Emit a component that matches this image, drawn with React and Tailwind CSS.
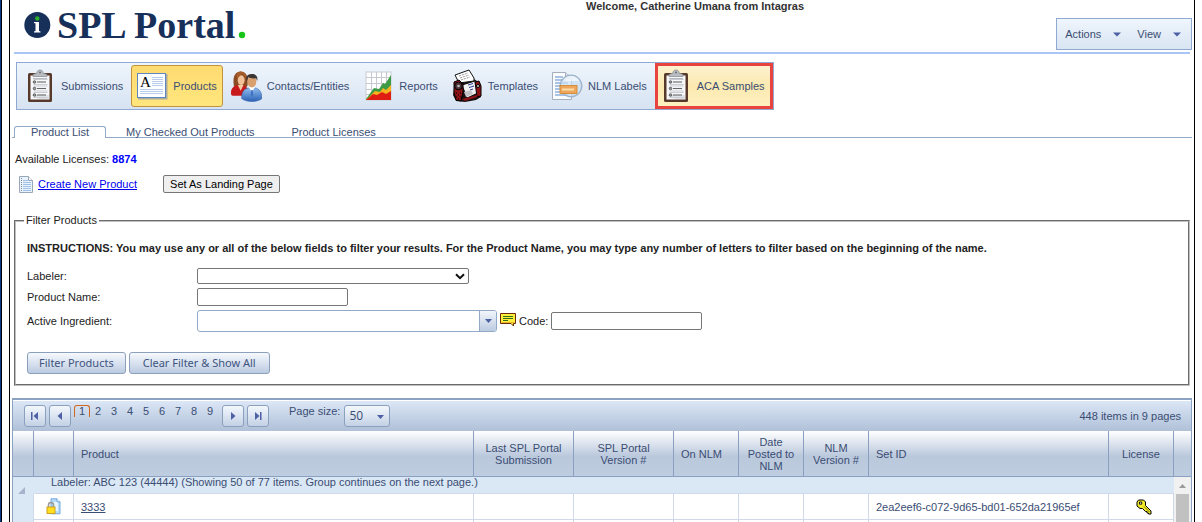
import React from "react";

const NAVY_TEXT = "text-[#3a4d73]";

function ClipboardIcon() {
  return (
    <svg width="26" height="34" viewBox="0 0 26 34" aria-hidden="true">
      <rect x="1" y="4" width="24" height="29" rx="1.500" fill="#573a2b" />
      <rect x="3.500" y="6.500" width="19" height="24" fill="#f7f8fa" />
      <path d="M4 26h18v4h-10z" fill="#dfe3e8" />
      <path d="M6 7.500V5.500l4-1.500C10 2 11.200 1 13 1s3 1 3 3l4 1.500V7.500z" fill="#b9bdc2" stroke="#85898e" strokeWidth="0.700" />
      <circle cx="13" cy="3.400" r="1" fill="#6a6d71" />
      <path d="M6 9.500h14" stroke="#a5a9af" strokeWidth="0.800" />
      {[13, 19.500, 26].map((y) => (
        <g key={y}>
          <path d={`M6.500 ${y - 2.500}h14M6.500 ${y + 2.500}h14`} stroke="#c9cdd3" strokeWidth="1" />
          <circle cx="7.500" cy={y} r="1.300" fill="#999" stroke="#444" strokeWidth="0.700" />
          <path d={`M10 ${y}h9`} stroke="#666" strokeWidth="1.100" />
        </g>
      ))}
    </svg>
  );
}

function ProductDocIcon() {
  return (
    <svg width="32" height="28" viewBox="0 0 32 28" aria-hidden="true">
      <rect x="2" y="2" width="29.500" height="25.500" fill="#8896ad" opacity="0.700" />
      <rect x="1.500" y="1.500" width="28" height="24" fill="#fbfdff" stroke="#5f86c0" />
      <text x="4" y="15" fontFamily="Liberation Serif, serif" fontSize="15" fill="#000">A</text>
      <path d="M16 5.500h11M16 7.500h11M16 9.500h11M16 11.500h11M16 13.500h11M4 17.500h23M4 19.500h23M4 21.500h23" stroke="#b9cdea" strokeWidth="1" />
    </svg>
  );
}

function PeopleIcon() {
  return (
    <svg width="33" height="33" viewBox="0 0 33 33" aria-hidden="true">
      <defs>
        <linearGradient id="blueCoat" x1="0" y1="0" x2="0" y2="1">
          <stop offset="0" stopColor="#8fbdf0" />
          <stop offset="1" stopColor="#2c61b4" />
        </linearGradient>
      </defs>
      <path d="M4 16C2 4 7 1 11 1s9 3 7 15l-3 3H6z" fill="#8a4a22" />
      <path d="M1 23c0-5 3-7 7-8h6l5 4v7H3c-1.500 0-2-1-2-3z" fill="#c8191d" />
      <path d="M8 15l3 6 3-6z" fill="#f3c9a4" />
      <ellipse cx="11.500" cy="10" rx="3.600" ry="5" fill="#f2c197" />
      <path d="M7 8c2-1 4-3 5-5 2 1 4 3 4 6 2-5-1-8-5-8S6 4 7 8z" fill="#a65e2c" />
      <path d="M12 29c0-8 3-10 7-11h7c4 1 7 4 7 11-5 4-16 4-21 0z" fill="url(#blueCoat)" stroke="#3563a8" strokeWidth="0.600" />
      <path d="M19 17l3.500 5 3.500-5z" fill="#fff" />
      <path d="M22 20h1.300l.6 5-1.200 2-1.300-2z" fill="#3f6fc0" />
      <ellipse cx="22.500" cy="11.500" rx="4.600" ry="6" fill="#d99f6c" />
      <path d="M17 11c-1-5 1-7.500 5.500-7.500S29 6 28 11l-1-3c-3 .5-6 0-8-1z" fill="#3b3533" />
    </svg>
  );
}

function ChartIcon() {
  return (
    <svg width="27" height="30" viewBox="0 0 27 30" aria-hidden="true">
      <rect x="1" y="1" width="25" height="28" fill="#fff" stroke="#c9ccd2" />
      <path d="M6.500 1v28M11.500 1v28M16.500 1v28M21.500 1v28M1 6.500h25M1 12.500h25M1 18.500h25M1 23.500h25" stroke="#c6cad0" strokeWidth="1" />
      <path d="M1 28L9 17l5 1 4-6 2 1 6-9v25H1z" fill="#3d9a45" />
      <path d="M1 29l9-9 5 1 3-4 3 2 5-5v15z" fill="#f7b21d" />
      <path d="M1 29l7-6 4 1 5-3 4 2 5-3v9z" fill="#e01d12" />
    </svg>
  );
}

function RolodexIcon() {
  return (
    <svg width="30" height="34" viewBox="0 0 30 34" aria-hidden="true">
      <path d="M3 14l5-3 14-1 6 4 1 5v9l-5 3-11 2-9-1-3-6z" fill="#1a1010" />
      <path d="M3 6L17 1l5 8v3L7 14z" fill="#fff" stroke="#111" />
      <path d="M7 7l9-3M8 9l9-3M9 11l9-3" stroke="#999" strokeDasharray="2 1" />
      <path d="M10 16l13-4 3 12-11 5z" fill="#f2f2f4" stroke="#111" />
      <path d="M16 16l5-1.500M17 18.500l5-1.500M18 21l3-1" stroke="#2a3d93" />
      <path d="M12 23l7-2 2 4-7 3z" fill="#c4c4c8" />
      <path d="M2 13l5-2 4 4v8l-2 9-5-1-2-8z" fill="#8c1218" stroke="#000" />
      <circle cx="6.500" cy="17" r="3.800" fill="#4c3438" stroke="#000" />
      <circle cx="6.500" cy="17" r="1.300" fill="#bbb" />
      <path d="M4 24h1M6 26h1M4 28h1M6 30h1M8 24h1M8 28h1" stroke="#000" />
      <path d="M23 13l4-1 2 5v10l-4 1z" fill="#8c1218" stroke="#000" />
      <circle cx="26" cy="17" r="1.500" fill="#ddd" stroke="#000" />
      <path d="M10 30l15-4v2l-12 4z" fill="#8c1218" />
    </svg>
  );
}

function LabelSearchIcon() {
  return (
    <svg width="32" height="30" viewBox="0 0 32 30" aria-hidden="true">
      <path d="M1.500 1.500h13l6 5.500v21.500h-19z" fill="#fbfcfe" stroke="#a4aebd" />
      <path d="M14.500 1.500v6h6" fill="#e3e8ef" stroke="#a4aebd" />
      <path d="M4 6h8M4 9h11M4 12h13M4 15h13M4 18h13M4 21h13M4 24h13" stroke="#8fb0dc" strokeWidth="1.300" />
      <circle cx="20" cy="15" r="10.800" fill="#c9dff4" fillOpacity="0.700" stroke="#9db4cc" strokeWidth="1.300" />
      <path d="M12 10a9 9 0 0 1 16 0z" fill="#fff" opacity="0.600" />
      <rect x="9" y="14.500" width="17" height="8" fill="#eea75a" stroke="#d08226" strokeWidth="0.800" />
      <path d="M11 18.500h12" stroke="#fbdca8" strokeWidth="2" />
    </svg>
  );
}

const TOOLS = [
  { label: "Submissions", Icon: ClipboardIcon },
  { label: "Products", Icon: ProductDocIcon, active: true },
  { label: "Contacts/Entities", Icon: PeopleIcon },
  { label: "Reports", Icon: ChartIcon },
  { label: "Templates", Icon: RolodexIcon },
  { label: "NLM Labels", Icon: LabelSearchIcon },
  { label: "ACA Samples", Icon: ClipboardIcon, marked: true },
];

function Header() {
  return (
    <header className="mx-1 flex h-[54px] items-start border-b-2 border-[#a9c6f6]">
      <div className="flex w-[572px] items-start pl-[10px] pt-[5px]">
        <svg className="mt-[6px]" width="28" height="28" viewBox="0 0 28 28" aria-hidden="true">
          <circle cx="13.300" cy="14" r="13" fill="#17305a" />
          <circle cx="13.300" cy="7.500" r="2.200" fill="#2bb02b" />
          <path d="M10 11h5v9l1.500.5V21.500h-6.500v-1l1.500-.5v-7.500L10 12z" fill="#fff" />
        </svg>
        <h1 className="ml-[5px] whitespace-nowrap font-['Liberation_Serif',serif] text-[38px] font-bold leading-10 text-[#17305a]">
          SPL Portal
        </h1>
        <svg className="mt-[26px] ml-[3px]" width="8" height="8" viewBox="0 0 8 8" aria-hidden="true">
          <circle cx="4" cy="4" r="3.200" fill="#19c419" />
        </svg>
      </div>
      <p className="flex-1 whitespace-nowrap font-bold leading-3 text-[#333]">Welcome, Catherine Umana from Intagras</p>
      <nav className={`-mr-[2px] mt-[18px] flex h-8 items-center gap-4 border border-[#8fa9d3] bg-linear-to-b from-[#eff5fc] to-[#d9e5f3] px-2 pr-[10px] ${NAVY_TEXT}`}>
        {["Actions", "View"].map((name) => (
          <button key={name} type="button" className="flex items-center gap-3">
            {name}
            <svg width="8" height="5" viewBox="0 0 8 5" aria-hidden="true">
              <path d="M0 .5h8L4 4.500z" fill="#4d5fa5" />
            </svg>
          </button>
        ))}
      </nav>
    </header>
  );
}

function Toolbar() {
  return (
    <nav className={`ml-[6px] mt-2 flex h-12 w-fit items-center gap-[2px] border border-[#8fa9d3] bg-linear-to-b from-[#eff5fc] to-[#d7e3f2] px-[2px] ${NAVY_TEXT}`}>
      {TOOLS.map(({ label, Icon, active, marked }) => (
        <button
          key={label}
          type="button"
          className={`relative flex h-[42px] items-center gap-[5px] whitespace-nowrap border pl-1 pr-[5px] ${
            active
              ? "rounded-[3px] border-[#c2923c] bg-linear-to-b from-[#ffdb72] to-[#ffe67c]"
              : marked
                ? "border-[#fbe08c] bg-linear-to-b from-[#fdf2cf] via-[#fce9b0] to-[#fdf0c0]"
                : "border-transparent"
          }`}
        >
          <span className="flex w-8 justify-center">
            <Icon />
          </span>
          {label}
          {marked && <span className="pointer-events-none absolute -inset-y-[3px] -left-px -right-[3px] border-3 border-[#e8433f]" />}
        </button>
      ))}
    </nav>
  );
}

function Tabs() {
  return (
    <div role="tablist" className={`ml-[2px] mr-[2px] mt-4 flex h-3 items-end gap-[3px] border-b border-[#93a9c8] pl-[2px] leading-3 ${NAVY_TEXT}`}>
      <button role="tab" aria-selected="true" type="button" className="-mb-px h-3 rounded-t-[3px] border border-b-0 border-[#93a9c8] bg-white px-4 leading-[11px]">
        Product List
      </button>
      <button role="tab" aria-selected="false" type="button" className="-mb-px h-3 px-[17px]">My Checked Out Products</button>
      <button role="tab" aria-selected="false" type="button" className="-mb-px h-3 px-[17px]">Product Licenses</button>
    </div>
  );
}

function NewDocIcon() {
  return (
    <svg width="14" height="17" viewBox="0 0 14 17" aria-hidden="true">
      <path d="M.5.5h9l4 4v12H.5z" fill="#eaf2fb" stroke="#9aa7b8" />
      <path d="M9.500.5v4h4" fill="#fff" stroke="#9aa7b8" />
      <path d="M4 4.500h5M4 6.500h8M4 8.500h8M4 10.500h8M4 12.500h8M4 14.500h8" stroke="#9fc1e8" />
      <path d="M2.500 2v13" stroke="#7d8896" strokeDasharray="1 1" />
    </svg>
  );
}

const fieldBorder = "rounded-[2px] border border-[#767676] bg-white px-1 outline-none";
const gradientButton =
  "h-[22px] rounded-[3px] border border-[#8ba0bd] bg-linear-to-b from-[#f6f9fd] to-[#bccbe1] font-['Noto_Sans','Open_Sans',sans-serif] text-[11px] leading-5 text-[#3f5480]";

function FilterPanel() {
  return (
    <fieldset className="mx-1 mt-[21px] border-2 border-[#c0c0c0] px-2 pb-[10px] [border-style:groove]">
      <legend className="px-[2px] leading-[13px]">Filter Products</legend>
      <div className="px-[3px] pt-[15px]">
        <p className="font-bold leading-3">
          INSTRUCTIONS: You may use any or all of the below fields to filter your results. For the Product Name, you may
          type any number of letters to filter based on the beginning of the name.
        </p>
        <div className="mt-[14px] grid grid-cols-[170px_1fr] items-center gap-y-1">
          <label htmlFor="labeler">Labeler:</label>
          <div className="grid w-[272px] items-center">
            <select id="labeler" className={`col-start-1 row-start-1 h-4 w-full appearance-none ${fieldBorder}`}>
              <option></option>
            </select>
            <svg className="pointer-events-none col-start-1 row-start-1 mr-1 justify-self-end" width="10" height="7" viewBox="0 0 10 7" fill="none" aria-hidden="true">
              <path d="M1 1.200l4 4 4-4" stroke="#111" strokeWidth="2" />
            </svg>
          </div>
          <label htmlFor="productName">Product Name:</label>
          <input id="productName" type="text" className={`h-[18px] w-[151px] ${fieldBorder}`} />
          <label htmlFor="ingredient">Active Ingredient:</label>
          <div className="flex items-center">
            <div className="flex h-[22px] w-[300px] rounded-[3px] border border-[#93a9c8] bg-white">
              <input id="ingredient" type="text" className="min-w-0 flex-1 bg-transparent px-1 outline-none" />
              <button type="button" aria-label="Show ingredients" className="flex w-[17px] items-center justify-center rounded-r-[2px] border-l border-[#93a9c8] bg-linear-to-b from-[#f2f6fb] to-[#bccbe1]">
                <svg width="7" height="4" viewBox="0 0 7 4" aria-hidden="true">
                  <path d="M0 0h7L3.500 4z" fill="#4d5fa5" />
                </svg>
              </button>
            </div>
            <svg className="ml-[3px] mr-[3px] mb-[3px]" width="16" height="14" viewBox="0 0 16 14" aria-hidden="true">
              <path d="M.5.5h15v10h-2v2.500l-2.500-2.500H.5z" fill="#ffee3c" stroke="#6b2a0a" />
              <path d="M1.500 9.500h13" stroke="#f0b62a" />
              <path d="M3 3.500h10M3 5.500h10M3 7.500h5" stroke="#2f6e1a" />
            </svg>
            <label htmlFor="code">Code:</label>
            <input id="code" type="text" className={`ml-[3px] h-[18px] w-[151px] ${fieldBorder}`} />
          </div>
        </div>
        <div className="mt-5 flex gap-[3px]">
          <button type="button" className={`px-[11px] ${gradientButton}`}>Filter Products</button>
          <button type="button" className={`px-[13px] ${gradientButton}`}>Clear Filter &amp; Show All</button>
        </div>
      </div>
    </fieldset>
  );
}

function PagerButton({ label, d }) {
  return (
    <button type="button" aria-label={label} className="flex size-[22px] items-center justify-center rounded-[3px] border border-[#8ba0bd] bg-linear-to-b from-[#f4f8fd] to-[#c3d1e5]">
      <svg width="8" height="8" viewBox="0 0 8 8" aria-hidden="true">
        <path d={d} fill="#4d5fa5" />
      </svg>
    </button>
  );
}

function Pager() {
  return (
    <div className="flex h-[30px] items-start bg-linear-to-b from-[#dce7f6] to-[#afc0d8] pl-[11px] pr-[10px] pt-1">
      <div className="flex gap-[3px]">
        <PagerButton label="First page" d="M0 0h1.500v8H0zM7 0v8L2.500 4z" />
        <PagerButton label="Previous page" d="M6 0v8L1.500 4z" />
      </div>
      <div className="ml-[3px] flex leading-3">
        {["1", "2", "3", "4", "5", "6", "7", "8", "9"].map((n) => (
          <a key={n} href={`#page${n}`} className={`h-3 w-4 text-center ${n === "1" ? "rounded-t-[3px] border border-b-0 border-[#d2691e] leading-[10px]" : ""}`}>
            {n}
          </a>
        ))}
      </div>
      <div className="ml-1 flex gap-[3px]">
        <PagerButton label="Next page" d="M2 0v8l4.500-4z" />
        <PagerButton label="Last page" d="M1 0v8l4.500-4zM6 0h1.500v8H6z" />
      </div>
      <label htmlFor="pageSize" className="ml-5 leading-3">Page size:</label>
      <div className="ml-1 grid w-[46px] items-center">
        <select id="pageSize" defaultValue="50" className="col-start-1 row-start-1 h-[22px] w-full appearance-none rounded-[3px] border border-[#8ba0bd] bg-linear-to-b from-[#f4f8fd] to-[#c3d1e5] pl-1 font-['Open_Sans','Noto_Sans',sans-serif] text-xs leading-5 outline-none">
          <option>20</option>
          <option>50</option>
        </select>
        <svg className="pointer-events-none col-start-1 row-start-1 mr-[6px] mt-px justify-self-end" width="7" height="4" viewBox="0 0 7 4" aria-hidden="true">
          <path d="M0 0h7L3.500 4z" fill="#4d5fa5" />
        </svg>
      </div>
      <p className="ml-auto leading-[22px]">448 items in 9 pages</p>
    </div>
  );
}

function LockedDocIcon() {
  return (
    <svg className="mx-auto" width="15" height="17" viewBox="0 0 15 17" aria-hidden="true">
      <path d="M5 .8h6l3 3v12H5z" fill="#b7dcf8" stroke="#6aa3d8" strokeWidth="0.900" />
      <path d="M7 4h5v9H7z" fill="#e5f4ff" />
      <path d="M11 .8v3h3" fill="#fff" stroke="#6aa3d8" strokeWidth="0.900" />
      <path d="M2.500 9.500V7a2.500 2.500 0 0 1 5 0v2.500" fill="none" stroke="#9a9a9a" strokeWidth="1.500" />
      <rect x="1" y="9" width="8" height="6.500" fill="#ffdf1f" stroke="#c89a18" strokeWidth="0.900" />
    </svg>
  );
}

function KeyIcon() {
  return (
    <svg className="mx-auto" width="22" height="16" viewBox="-6 0 22 16" aria-hidden="true">
      <path d="M2.500 1h5L9.500 3v3.500l5.500 5.500v3h-2.500v-1h-1.500V12.500h-1.500L6.500 9.500H4L1 7V3z" fill="#f3ea2a" stroke="#000" />
      <path d="M3.500 3h2.200v2.200H3.500z" fill="#fff" stroke="#000" strokeWidth="0.900" />
      <path d="M8 7.500l5.500 5.500" stroke="#77720c" />
    </svg>
  );
}

const COLUMNS = [
  { label: "", width: "w-[21px]" },
  { label: "", width: "w-10" },
  { label: "Product", width: "w-auto", left: true },
  { label: "Last SPL Portal Submission", width: "w-[100px]", pad: "px-2" },
  { label: "SPL Portal Version #", width: "w-[100px]", pad: "px-4" },
  { label: "On NLM", width: "w-[65px]", left: true },
  { label: "Date Posted to NLM", width: "w-[65px]", pad: "px-2" },
  { label: "NLM Version #", width: "w-[65px]", pad: "px-2" },
  { label: "Set ID", width: "w-[240px]", left: true },
  { label: "License", width: "w-[65px]" },
];

const cell = "h-[26px] border-b border-r border-[#cfd9ea] bg-white p-0";

function ProductGrid() {
  return (
    <section className={`ml-[2px] mr-[2px] mt-3 border-x border-t-2 border-[#8ba3c2] ${NAVY_TEXT}`}>
      <div className="border-t border-white">
        <Pager />
      </div>
      <table className="w-full table-fixed border-separate border-spacing-0">
        <thead>
          <tr className="bg-linear-to-b from-white via-[#bac8dc] via-55% to-[#bfcde0]">
            {COLUMNS.map(({ label, width, left, pad }, i) => (
              <th key={i} scope="col" className={`h-[46px] border-b border-r border-[#8ba0c0] p-0 font-normal leading-3 ${width} ${left ? "pl-[7px] text-left" : pad || ""}`}>
                {label}
              </th>
            ))}
            <th aria-hidden="true" className="w-[17px] border-b border-[#8ba0c0] p-0" />
          </tr>
        </thead>
        <tbody>
          <tr className="bg-[#dae7f5]">
            <td className="h-[17px] p-0 align-bottom">
              <svg className="ml-[5px]" width="7" height="7" viewBox="0 0 7 7" aria-hidden="true">
                <path d="M7 0v7H0z" fill="#a5b3cb" />
              </svg>
            </td>
            <td colSpan={9} className="border-b border-[#cfd9ea] p-0 pl-[17px] align-top leading-[10px]">
              Labeler: ABC 123 (44444) (Showing 50 of 77 items. Group continues on the next page.)
            </td>
            <td rowSpan={3} className="bg-[#f1f1f1] p-0 align-top">
              <div className="flex flex-col items-center pt-[7px]">
                <svg width="7" height="4" viewBox="0 0 7 4" aria-hidden="true">
                  <path d="M3.500 0L7 4H0z" fill="#9b9b9b" />
                </svg>
                <div className="mt-[6px] h-13 w-[13px] bg-[#c1c1c1]" />
              </div>
            </td>
          </tr>
          <tr>
            <td className="border-r border-[#cfd9ea] bg-[#dae7f5] p-0" />
            <td className={cell}>
              <LockedDocIcon />
            </td>
            <td className={`pl-[7px] ${cell}`}>
              <a href="#3333" className="underline">3333</a>
            </td>
            <td className={cell} />
            <td className={cell} />
            <td className={cell} />
            <td className={cell} />
            <td className={cell} />
            <td className={`pl-[7px] ${cell}`}>2ea2eef6-c072-9d65-bd01-652da21965ef</td>
            <td className={cell}>
              <KeyIcon />
            </td>
          </tr>
          <tr>
            <td className="h-7 border-r border-[#cfd9ea] bg-[#dae7f5] p-0" />
            {COLUMNS.slice(1).map((_, i) => (
              <td key={i} className={cell} />
            ))}
          </tr>
        </tbody>
      </table>
    </section>
  );
}

export default function App() {
  return (
    <div className="flex h-screen overflow-hidden bg-white pr-[7px] font-['Liberation_Sans',Arial,sans-serif] text-[11px] leading-4 text-[#222]">
      <div className="mr-[7px] w-[2px] shrink-0 border-r border-black bg-[#0a3a86]" />
      <main className="min-w-0 flex-1 border-x border-black">
        <Header />
        <Toolbar />
        <Tabs />
        <p className="ml-[5px] mt-[13px]">
          Available Licenses: <b className="text-[#0000ff]">8874</b>
        </p>
        <div className="mt-2 flex h-[18px] items-center pl-[9px]">
          <NewDocIcon />
          <a href="#new" className="ml-[5px] text-[#0000ee] underline">Create New Product</a>
          <button type="button" className="ml-[26px] h-[18px] rounded-[2px] border border-[#767676] bg-[#efefef] px-[6px] leading-4 text-black">
            Set As Landing Page
          </button>
        </div>
        <FilterPanel />
        <ProductGrid />
      </main>
    </div>
  );
}
